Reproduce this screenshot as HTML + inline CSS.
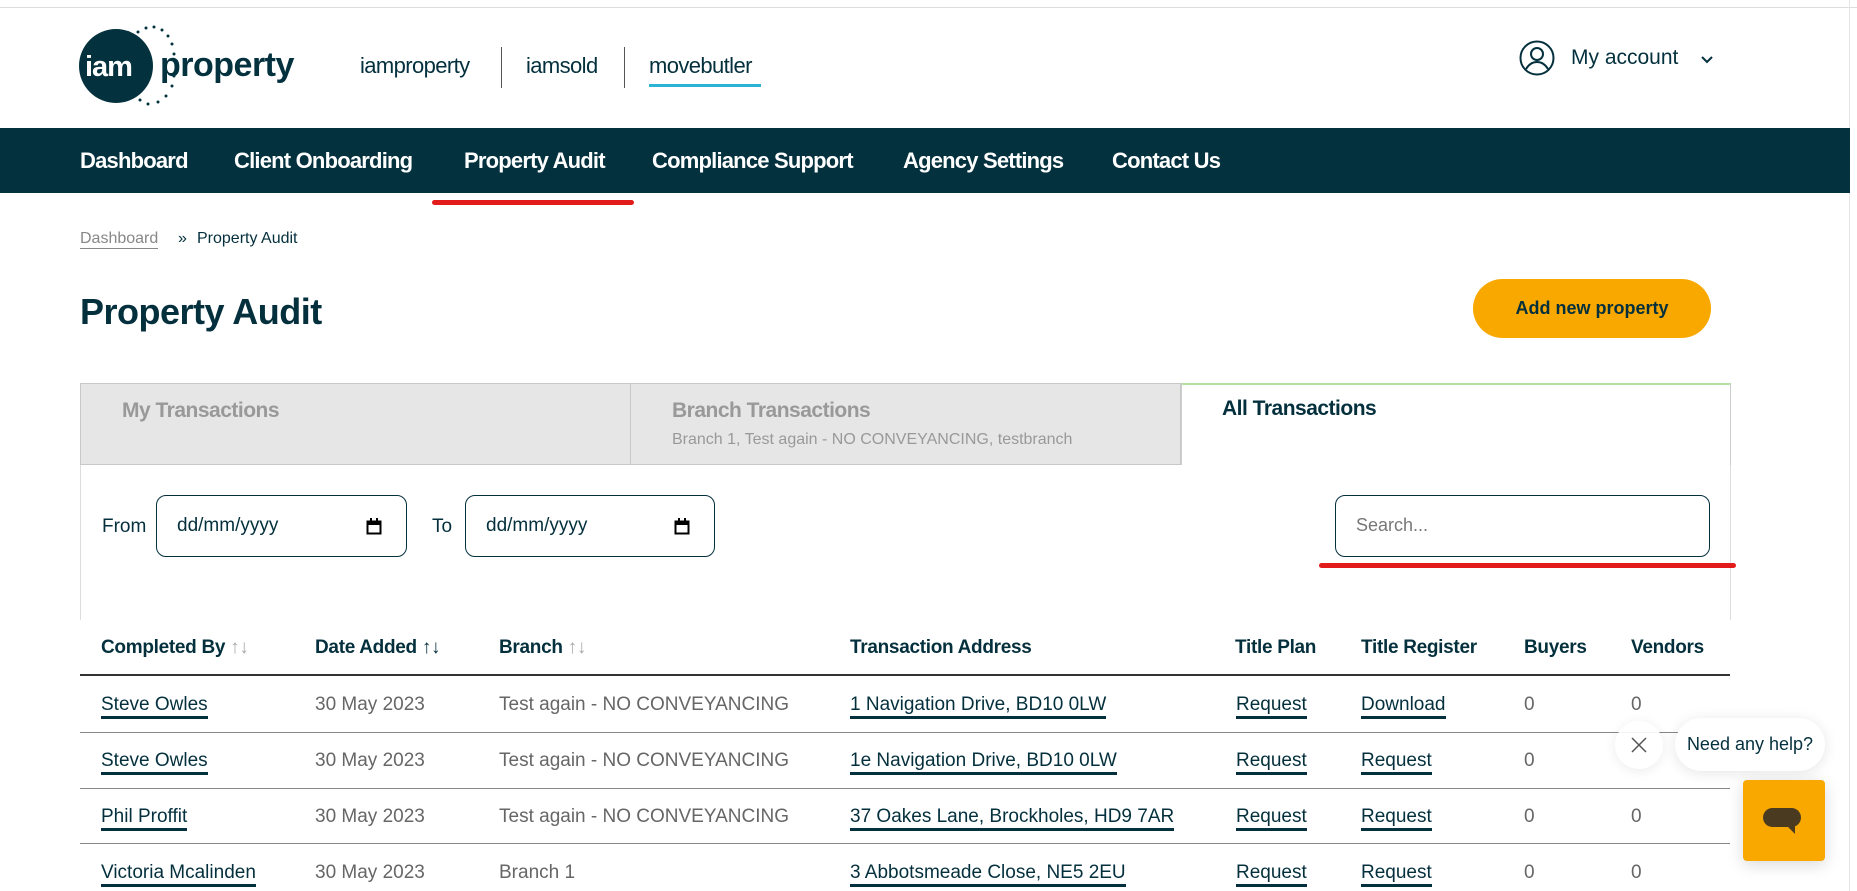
<!DOCTYPE html>
<html><head><meta charset="utf-8"><style>
*{margin:0;padding:0;box-sizing:border-box}
body{width:1857px;height:891px;overflow:hidden;background:#fff;font-family:"Liberation Sans",sans-serif;color:#04303d;position:relative}
.a{position:absolute;white-space:nowrap}
.nav{position:absolute;left:0;top:128px;width:1850px;height:65px;background:#03313e}
.nav span{position:absolute;top:20px;color:#fff;font-weight:bold;font-size:22px;letter-spacing:-0.8px}
.tab{position:absolute;top:383px;height:82px;border:1px solid #c8c8c8;background:#e7e6e6}
.inp{position:absolute;top:495px;height:62px;border:1px solid #04303d;border-radius:10px;background:#fff;font-size:19px}
.th{position:absolute;top:637px;font-size:19px;font-weight:bold;letter-spacing:-0.3px}
.td{position:absolute;font-size:19px;color:#666}
.lk{position:absolute;font-size:19px;color:#04303d;border-bottom:3px solid #04303d;line-height:22px}
.hl{position:absolute;left:80px;width:1650px;height:1px;background:#888}
</style></head><body>
<div class="a" style="left:0;top:7px;width:1857px;height:1px;background:#ddd"></div>
<div class="a" style="left:1849px;top:0;width:1px;height:891px;background:#e5e5e5"></div>
<!-- logo -->
<svg class="a" style="left:78px;top:24px" width="120" height="84" viewBox="0 0 120 84">
<circle cx="38" cy="42" r="37" fill="#03313e"/>
<g fill="#03313e"><circle cx="60" cy="8" r="1.5"/><circle cx="68" cy="4" r="1.5"/><circle cx="76" cy="3" r="1.5"/><circle cx="84" cy="6" r="1.5"/><circle cx="90" cy="12" r="1.5"/><circle cx="94" cy="20" r="1.5"/><circle cx="96" cy="30" r="1.5"/><circle cx="96" cy="52" r="1.5"/><circle cx="94" cy="62" r="1.5"/><circle cx="88" cy="72" r="1.5"/><circle cx="80" cy="78" r="1.5"/><circle cx="70" cy="80" r="1.5"/><circle cx="62" cy="76" r="1.5"/></g>
<text x="7" y="52" fill="#fff" font-family="Liberation Sans" font-weight="bold" font-size="29" letter-spacing="-1">iam</text>
</svg>
<div class="a" style="left:160px;top:46px;font-size:34px;font-weight:bold;color:#03313e;letter-spacing:-0.5px">property</div>
<div class="a" style="left:360px;top:53px;font-size:22px;letter-spacing:-0.6px">iamproperty</div>
<div class="a" style="left:501px;top:47px;width:1px;height:41px;background:#555"></div>
<div class="a" style="left:526px;top:53px;font-size:22px;letter-spacing:-0.6px">iamsold</div>
<div class="a" style="left:624px;top:47px;width:1px;height:41px;background:#555"></div>
<div class="a" style="left:649px;top:53px;font-size:22px;letter-spacing:-0.6px">movebutler</div>
<div class="a" style="left:649px;top:84px;width:112px;height:3px;background:#2bb3d6"></div>
<svg class="a" style="left:1519px;top:40px" width="36" height="36" viewBox="0 0 36 36" fill="none" stroke="#04303d" stroke-width="2"><circle cx="18" cy="18" r="16.5"/><circle cx="18" cy="14" r="6"/><path d="M7 29c3-5 7-7 11-7s8 2 11 7"/></svg>
<div class="a" style="left:1571px;top:46px;font-size:21px">My account</div>
<svg class="a" style="left:1700px;top:55px" width="14" height="10"><path d="M2 2l5 5 5-5" stroke="#04303d" stroke-width="2" fill="none"/></svg>
<div class="nav">
<span style="left:80px">Dashboard</span><span style="left:234px">Client Onboarding</span><span style="left:464px">Property Audit</span><span style="left:652px">Compliance Support</span><span style="left:903px">Agency Settings</span><span style="left:1112px">Contact Us</span>
</div>
<div class="a" style="left:432px;top:200px;width:202px;height:5px;border-radius:3px;background:#e21b1b"></div>
<div class="a" style="left:80px;top:230px;font-size:16px;color:#888;border-bottom:1px solid #888">Dashboard</div>
<div class="a" style="left:178px;top:230px;font-size:16px">»</div>
<div class="a" style="left:197px;top:230px;font-size:16px">Property Audit</div>
<div class="a" style="left:80px;top:291px;font-size:36px;font-weight:bold;letter-spacing:-0.5px">Property Audit</div>
<div class="a" style="left:1473px;top:279px;width:238px;height:59px;border-radius:30px;background:#f9a800;text-align:center;line-height:59px;font-size:18px;font-weight:bold">Add new property</div>
<div class="tab" style="left:80px;width:551px"><div class="a" style="left:41px;top:15px;font-size:21px;font-weight:bold;color:#999;letter-spacing:-0.5px">My Transactions</div></div>
<div class="tab" style="left:630px;width:551px"><div class="a" style="left:41px;top:15px;font-size:21px;font-weight:bold;color:#999;letter-spacing:-0.5px">Branch Transactions</div><div class="a" style="left:41px;top:47px;font-size:16px;color:#999">Branch 1, Test again - NO CONVEYANCING, testbranch</div></div>
<div class="a" style="left:1181px;top:383px;width:550px;height:82px;border:1px solid #ccc;border-top:2px solid #b5e0a5;border-bottom:none;background:#fff"><div class="a" style="left:40px;top:12px;font-size:21px;font-weight:bold;letter-spacing:-0.5px">All Transactions</div></div>
<div class="a" style="left:80px;top:465px;width:1px;height:155px;background:#ddd"></div>
<div class="a" style="left:1730px;top:465px;width:1px;height:155px;background:#ddd"></div>
<div class="a" style="left:102px;top:516px;font-size:19px">From</div>
<div class="inp" style="left:156px;width:251px"><span class="a" style="left:20px;top:19px">dd/mm/yyyy</span><svg class="a" style="left:209px;top:22px" width="16" height="17"><rect x="1.5" y="3.5" width="13" height="12" fill="none" stroke="#000" stroke-width="2"/><rect x="1" y="3" width="14" height="4" fill="#000"/><rect x="4" y="0" width="2" height="4"/><rect x="10" y="0" width="2" height="4"/></svg></div>
<div class="a" style="left:432px;top:516px;font-size:19px">To</div>
<div class="inp" style="left:465px;width:250px"><span class="a" style="left:20px;top:19px">dd/mm/yyyy</span><svg class="a" style="left:208px;top:22px" width="16" height="17"><rect x="1.5" y="3.5" width="13" height="12" fill="none" stroke="#000" stroke-width="2"/><rect x="1" y="3" width="14" height="4" fill="#000"/><rect x="4" y="0" width="2" height="4"/><rect x="10" y="0" width="2" height="4"/></svg></div>
<div class="inp" style="left:1335px;width:375px"><span class="a" style="left:20px;top:19px;color:#777;font-size:18px">Search...</span></div>
<div class="a" style="left:1319px;top:563px;width:417px;height:5px;border-radius:3px;background:#e21b1b"></div>
<div class="th" style="left:101px">Completed By <span style="color:#aaa;font-weight:normal">↑↓</span></div>
<div class="th" style="left:315px">Date Added <span style="font-weight:normal">↑↓</span></div>
<div class="th" style="left:499px">Branch <span style="color:#aaa;font-weight:normal">↑↓</span></div>
<div class="th" style="left:850px">Transaction Address</div>
<div class="th" style="left:1235px">Title Plan</div>
<div class="th" style="left:1361px">Title Register</div>
<div class="th" style="left:1524px">Buyers</div>
<div class="th" style="left:1631px">Vendors</div>
<div class="hl" style="top:674px;height:2px;background:#333"></div>
<div class="hl" style="top:732px"></div><div class="hl" style="top:788px"></div><div class="hl" style="top:843px"></div>

<div class="lk" style="left:101px;top:694px">Steve Owles</div><div class="td" style="left:315px;top:694px">30 May 2023</div><div class="td" style="left:499px;top:694px">Test again - NO CONVEYANCING</div><div class="lk" style="left:850px;top:694px">1 Navigation Drive, BD10 0LW</div><div class="lk" style="left:1236px;top:694px">Request</div><div class="lk" style="left:1361px;top:694px">Download</div><div class="td" style="left:1524px;top:694px">0</div><div class="td" style="left:1631px;top:694px">0</div>
<div class="lk" style="left:101px;top:750px">Steve Owles</div><div class="td" style="left:315px;top:750px">30 May 2023</div><div class="td" style="left:499px;top:750px">Test again - NO CONVEYANCING</div><div class="lk" style="left:850px;top:750px">1e Navigation Drive, BD10 0LW</div><div class="lk" style="left:1236px;top:750px">Request</div><div class="lk" style="left:1361px;top:750px">Request</div><div class="td" style="left:1524px;top:750px">0</div>
<div class="lk" style="left:101px;top:806px">Phil Proffit</div><div class="td" style="left:315px;top:806px">30 May 2023</div><div class="td" style="left:499px;top:806px">Test again - NO CONVEYANCING</div><div class="lk" style="left:850px;top:806px">37 Oakes Lane, Brockholes, HD9 7AR</div><div class="lk" style="left:1236px;top:806px">Request</div><div class="lk" style="left:1361px;top:806px">Request</div><div class="td" style="left:1524px;top:806px">0</div><div class="td" style="left:1631px;top:806px">0</div>
<div class="lk" style="left:101px;top:862px">Victoria Mcalinden</div><div class="td" style="left:315px;top:862px">30 May 2023</div><div class="td" style="left:499px;top:862px">Branch 1</div><div class="lk" style="left:850px;top:862px">3 Abbotsmeade Close, NE5 2EU</div><div class="lk" style="left:1236px;top:862px">Request</div><div class="lk" style="left:1361px;top:862px">Request</div><div class="td" style="left:1524px;top:862px">0</div><div class="td" style="left:1631px;top:862px">0</div>

<div class="a" style="left:1615px;top:721px;width:48px;height:48px;border-radius:50%;background:rgba(255,255,255,.9);box-shadow:0 2px 12px rgba(0,0,0,.08)"><svg class="a" style="left:16px;top:16px" width="16" height="16"><path d="M1 1l14 14M15 1L1 15" stroke="#555" stroke-width="1.5"/></svg></div>
<div class="a" style="left:1675px;top:718px;width:150px;height:53px;border-radius:27px;background:#fff;box-shadow:0 2px 14px rgba(0,0,0,.1);font-size:18px;line-height:53px;text-align:center">Need any help?</div>
<div class="a" style="left:1743px;top:780px;width:82px;height:81px;border-radius:4px;background:#f9a800;box-shadow:0 4px 16px rgba(0,0,0,.15)">
<div class="a" style="left:20px;top:28px;width:38px;height:19px;border-radius:10px;background:#4a3a1f"></div>
<svg class="a" style="left:44px;top:46px" width="10" height="10"><path d="M0 0h8v8z" fill="#4a3a1f"/></svg></div>
</body></html>
